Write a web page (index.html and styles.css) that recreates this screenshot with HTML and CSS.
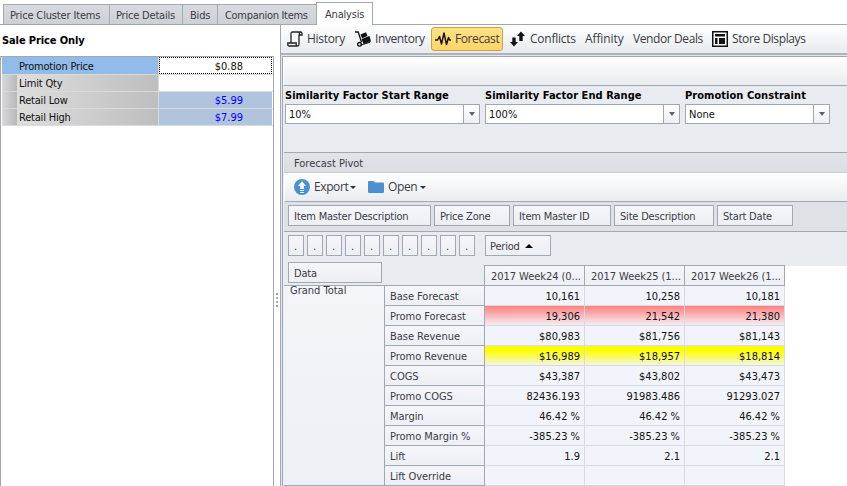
FILE: index.html
```
<!DOCTYPE html>
<html lang="en">
<head>
<meta charset="utf-8">
<title>Analysis - Forecast</title>
<link rel="stylesheet" href="styles.css">
</head>
<body>
<nav class="tabs">
  <span class="tab t1">Price Cluster Items</span><span class="tab t2">Price Details</span><span class="tab t3">Bids</span><span class="tab t4">Companion Items</span><span class="tab active">Analysis</span><span class="tab-fill"></span>
</nav>
<main class="main">
  <aside class="side">
    <h2>Sale Price Only</h2>
    <div class="props">
      <div class="prop selected"><span class="name">Promotion Price</span><span class="val">$0.88</span></div>
      <div class="prop"><span class="name">Limit Qty</span><span class="val"></span></div>
      <div class="prop blue"><span class="name">Retail Low</span><span class="val">$5.99</span></div>
      <div class="prop blue"><span class="name">Retail High</span><span class="val">$7.99</span></div>
    </div>
  </aside>
  <div class="splitter"><i></i><i></i><i></i><i></i></div>
  <section class="content">
    <div class="toolbar">
      <span class="tool history"><svg width="16" height="16" viewBox="0 0 16 16" fill="none" stroke="#222" stroke-width="1.3"><path d="M4 12V2.500Q4 1 5.500 1H13.500Q15 1 15 2.500V4H12.300V2.500Q12.300 1 13.500 1M12 4V13.500Q12 15 10.500 15H2Q.8 15 .8 13.700V12H9.200V13.500Q9.200 15 10.500 15"/></svg>History</span>
      <span class="tool inventory"><svg width="16" height="16" viewBox="0 0 16 16"><path d="M0 1H3.200L6.500 11.300" fill="none" stroke="#111" stroke-width="1.300"/><path d="M5.500 3.500 11 1.200 12.500 5 7 7.300ZM6.500 8 14.500 5 16 10.500 8.500 13Z" fill="#111"/><path d="M6 14 15 11.300" stroke="#111"/><circle cx="4.500" cy="13.300" r="1.800" fill="#fff" stroke="#111" stroke-width="1.400"/></svg>Inventory</span>
      <span class="tool forecast"><svg width="16" height="14" viewBox="0 0 16 14" fill="none" stroke="#1c1608" stroke-width="1.500" stroke-linejoin="round"><path d="M0 8H2.500L4.500 4.500 6.500 12 9 1 11.500 12.500 13.500 5.500 14.500 8H16"/></svg>Forecast</span>
      <span class="tool conflicts"><svg width="15" height="16" viewBox="0 0 15 16" fill="#111"><path d="M2.300 6.500H5.700V11H8L4 15.500 0 11H2.300ZM9.300 10V5H7L11 .5 15 5H12.700V10Z"/></svg>Conflicts</span>
      <span class="tool affinity">Affinity</span>
      <span class="tool vendor">Vendor Deals</span>
      <span class="tool store"><svg width="16" height="16" viewBox="0 0 16 16"><path d="M.75.75H15.250V15.250H.75Z" fill="#fff" stroke="#111" stroke-width="1.500"/><path d="M3 3H13V5.500H3ZM3 7H5.500V13H3ZM7 7H13V13H7Z" fill="#111"/></svg>Store Displays</span>
    </div>
    <div class="panel">
      <div class="strip"></div>
      <div class="filters">
        <div class="filter"><label>Similarity Factor Start Range</label><div class="combo"><span>10%</span><b></b></div></div>
        <div class="filter"><label>Similarity Factor End Range</label><div class="combo"><span>100%</span><b></b></div></div>
        <div class="filter small"><label>Promotion Constraint</label><div class="combo"><span>None</span><b></b></div></div>
      </div>
      <div class="pivot">
        <div class="caption">Forecast Pivot</div>
        <div class="actions">
          <svg width="16" height="16" viewBox="0 0 16 16"><circle cx="8" cy="8" r="8" fill="#4b91cf"/><path d="M8 2.300 12 7H9.800V10H6.200V7H4ZM6.200 11H9.800V12H6.200ZM6.200 13H9.800V14H6.200Z" fill="#fff"/></svg><span class="export">Export</span><i class="drop"></i>
          <svg class="folder" width="16" height="12" viewBox="0 0 16 12"><path d="M0 1Q0 0 1 0H5.500L7 1.500H15Q16 1.500 16 2.500V11Q16 12 15 12H1Q0 12 0 11Z" fill="#4b91cf"/></svg><span class="open">Open</span><i class="drop"></i>
        </div>
        <div class="fields">
          <span class="field f1">Item Master Description</span><span class="field f2">Price Zone</span><span class="field f3">Item Master ID</span><span class="field f4">Site Description</span><span class="field f5">Start Date</span>
        </div>
        <div class="measures">
          <span class="field dot">.</span><span class="field dot">.</span><span class="field dot">.</span><span class="field dot">.</span><span class="field dot">.</span><span class="field dot">.</span><span class="field dot">.</span><span class="field dot">.</span><span class="field dot">.</span><span class="field dot">.</span><span class="field period">Period <i></i></span>
        </div>
        <div class="grid">
          <div class="corner"><span class="field data">Data</span></div>
          <div class="colhead">2017 Week24 (0...</div><div class="colhead">2017 Week25 (1...</div><div class="colhead">2017 Week26 (1...</div><div class="blank"></div>
          <div class="total">Grand Total</div>
          <div class="rh">Base Forecast</div><div class="v">10,161</div><div class="v">10,258</div><div class="v">10,181</div>
          <div class="rh">Promo Forecast</div><div class="v red">19,306</div><div class="v red">21,542</div><div class="v red">21,380</div>
          <div class="rh">Base Revenue</div><div class="v">$80,983</div><div class="v">$81,756</div><div class="v">$81,143</div>
          <div class="rh">Promo Revenue</div><div class="v yellow">$16,989</div><div class="v yellow">$18,957</div><div class="v yellow">$18,814</div>
          <div class="rh">COGS</div><div class="v">$43,387</div><div class="v">$43,802</div><div class="v">$43,473</div>
          <div class="rh">Promo COGS</div><div class="v">82436.193</div><div class="v">91983.486</div><div class="v">91293.027</div>
          <div class="rh">Margin</div><div class="v">46.42 %</div><div class="v">46.42 %</div><div class="v">46.42 %</div>
          <div class="rh">Promo Margin %</div><div class="v">-385.23 %</div><div class="v">-385.23 %</div><div class="v">-385.23 %</div>
          <div class="rh">Lift</div><div class="v">1.9</div><div class="v">2.1</div><div class="v">2.1</div>
          <div class="rh">Lift Override</div><div class="v"></div><div class="v"></div><div class="v"></div>
        </div>
      </div>
    </div>
  </section>
</main>
</body>
</html>
```
FILE: styles.css
```
* { box-sizing: border-box; }
body { margin: 0; width: 847px; height: 486px; overflow: hidden; background: #fff; font: 11px/14px "DejaVu Sans Condensed", "DejaVu Sans", sans-serif; font-stretch: condensed; color: #3b3b45; letter-spacing: -.2px; white-space: nowrap; }
svg { flex: none; }

.tabs { height: 25px; padding-left: 3px; display: flex; align-items: flex-end; background: linear-gradient(#a2a8b3, #a2a8b3) 0 100% / 3px 1px no-repeat; }
.tab { height: 21px; border: 1px solid #a2a8b3; border-right: 0; background: linear-gradient(#d7dbe0, #cdd1d6); padding: 4px 0 0 6px; }
.t1 { width: 106px; letter-spacing: -.15px; }
.t2 { width: 73px; padding-left: 6px; }
.t3 { width: 35px; padding-left: 7px; }
.t4 { width: 99px; padding-left: 7px; letter-spacing: -.3px; }
.active { width: 57px; height: 23px; padding-left: 8px; border: 1px solid #a2a8b3; border-bottom: 0; background: #fff; padding-top: 5px; }
.tab-fill { flex: 1; height: 1px; background: #a2a8b3; }

.main { display: flex; height: 461px; }
.side { width: 274px; display: flex; flex-direction: column; }
h2 { margin: 0; height: 31px; padding: 9px 0 0 2px; font-size: 11px; line-height: 14px; color: #000; letter-spacing: -.1px; }
.props { flex: 1; border: 1px solid #a2a8b3; border-bottom: 0; padding-left: 1px; }
.prop { height: 17px; display: flex; color: #111; border-bottom: 1px solid #d8dade; }
.name { width: 157px; padding: 2px 0 0 17px; background: linear-gradient(90deg, #d8d8d8, #b8b8b8 15px, #dedede 15px, #bebebe); border-right: 1px solid #d8dade; }
.val { flex: 1; padding: 2px 29px 0 0; text-align: right; margin-right: 1px; letter-spacing: 0; }
.selected { height: 18px; }
.selected .name { padding-top: 3px; background: #91bbe9; }
.selected .val { border: 1px dotted #000; padding: 2px 28px 0 0; }
.blue .val { background: #b0c4de; color: #00f; }

.splitter { width: 6px; display: flex; flex-direction: column; align-items: center; gap: 2px; padding-top: 268px; }
.splitter i { width: 2px; height: 2px; background: #a2a8b3; }

.content { width: 567px; border-left: 1px solid #a2a8b3; display: flex; flex-direction: column; background: #e3e6ea; }
.toolbar { flex: none; height: 30px; border-bottom: 2px solid #adb2bb; background: linear-gradient(#fff, #e7eaee); display: flex; align-items: center; padding-left: 6px; font: 12px/16px "Open Sans", sans-serif; letter-spacing: -.4px; }
.tool { display: flex; align-items: center; gap: 4px; height: 24px; }
.history { width: 68px; letter-spacing: -.3px; }
.inventory { width: 76px; }
.forecast { width: 72px; border: 1px solid #c9a14a; border-radius: 3px; background: linear-gradient(#ffe184, #ffd565); padding-left: 3px; }
.conflicts { width: 82px; padding-left: 7px; gap: 5px; letter-spacing: -.25px; }
.affinity { width: 48px; letter-spacing: -.1px; }
.vendor { width: 79px; }

.panel { margin: 1px 0 0 1px; flex: none; height: 430px; border: solid #a2a8b3; border-width: 1px 0 0 1px; background: #e8ebf0; }
.strip { height: 29px; border-bottom: 1px solid #a2a8b3; border-left: 1px solid #fff; background: linear-gradient(#fff, #e9ecf0); }
.filters { height: 66px; display: flex; gap: 5px; padding: 2px 0 0 2px; }
.filter { width: 195px; }
.filter.small { width: 145px; }
label { display: block; height: 16px; padding-top: 1px; font-weight: 700; color: #000; letter-spacing: .05px; }
.combo { height: 20px; display: flex; border: 1px solid #a2a8b3; background: #fff; color: #111; }
.combo span { flex: 1; padding: 3px 0 0 3px; letter-spacing: 0; }
.combo b { width: 16px; border-left: 1px solid #a2a8b3; background: linear-gradient(#fff, #eceff2); display: flex; align-items: center; justify-content: center; }
.combo b::after { content: ""; border: solid transparent; border-width: 4px 3.5px 0; border-top-color: #5d626b; }

.pivot { border-top: 1px solid #a2a8b3; margin-left: 1px; }
.caption { height: 20px; padding: 4px 0 0 10px; background: linear-gradient(#e1e4e8, #dadde2); border-bottom: 1px solid #c9cdd3; letter-spacing: 0; }
.actions { height: 29px; border-bottom: 1px solid #a2a8b3; border-left: 1px solid #fff; background: linear-gradient(#fff, #e9ecf0); display: flex; align-items: center; padding-left: 9px; font: 12px/16px "Open Sans", sans-serif; letter-spacing: -.4px; }
.export, .open { margin-left: 4px; }
.export { width: 36px; }
.open { width: 32px; }
.drop { border: solid transparent; border-width: 3px 3px 0; border-top-color: #333; }
.folder { margin-left: 12px; }
.fields { height: 30px; display: flex; gap: 3px; padding: 3px 0 0 4px; background: #dee1e6; border-bottom: 1px solid #a2a8b3; }
.field { height: 21px; border: 1px solid #a2a8b3; background: linear-gradient(#f4f6fa, #eceff4); padding: 4px 0 0 5px; }
.f1 { width: 143px; }
.f2 { width: 76px; }
.f3 { width: 98px; }
.f4 { width: 100px; }
.f5 { width: 76px; }
.measures { height: 33px; display: flex; gap: 3px; padding: 3px 0 0 4px; }
.dot { width: 16px; }
.period { width: 66px; margin-left: 7px; padding-left: 4px; display: flex; }
.period i { height: 0; margin: 4px 0 0 5px; border: solid transparent; border-width: 0 4px 4px; border-bottom-color: #000; }

.grid { display: grid; grid-template-columns: 101px 100px 100px 100px 100px 62px; grid-template-rows: 21px; grid-auto-rows: 20px; }
.corner { grid-column: 1 / 3; margin-top: -3px; border-bottom: 1px solid #a2a8b3; padding-left: 4px; }
.data { display: block; width: 94px; }
.colhead { border: 1px solid #a2a8b3; margin-left: -1px; padding: 4px 0 0 6px; background: linear-gradient(#f4f6fa, #eceff4); letter-spacing: -.05px; }
.blank { grid-column: 6; grid-row: 1 / 12; margin-top: 1px; background: #fff; }
.total { grid-column: 1; grid-row: 2 / 12; background: linear-gradient(#f3f5f9, #edf0f5); padding: 0 0 0 6px; border-bottom: 1px solid #a2a8b3; line-height: 10px; letter-spacing: 0; }
.rh { grid-column: 2; border: solid #a2a8b3; border-width: 0 1px 1px; margin-left: -1px; padding: 4px 0 0 5px; background: linear-gradient(#f4f6fa, #eceff4); letter-spacing: -.03px; }
.v { border: solid #d8dade; border-width: 0 1px 1px 0; padding: 4px 4px 0 0; text-align: right; color: #111; background: #f1f4fa; letter-spacing: 0; }
.red { background: linear-gradient(#ff8080, #f4eef3); }
.yellow { background: linear-gradient(#ff0 25%, #f3f5e4); }
```
